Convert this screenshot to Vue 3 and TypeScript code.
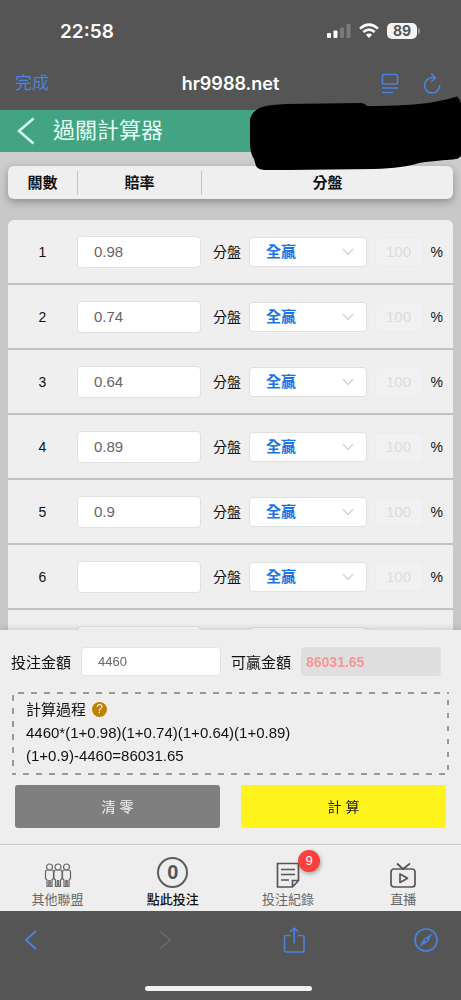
<script setup lang="ts">
import { computed, reactive, ref } from 'vue'

interface Leg {
  odds: string
  result: string
  percent: string
}

const results: string[] = ['全贏', '贏', '輸', '全輸']

const legs = reactive<Leg[]>(
  ['0.98', '0.74', '0.64', '0.89', '0.9', '', '', '', '', ''].map((odds) => ({
    odds,
    result: '全贏',
    percent: '100',
  })),
)

const stake = ref('4460')
const winnings = ref('86031.65')

const formula = computed(() => {
  const factors = legs.filter((leg) => leg.odds !== '').map((leg) => `(1+${leg.odds})`)
  return `${stake.value}*${factors.join('')}-${stake.value}=${winnings.value}`
})

function calculate(): void {
  const amount = Number(stake.value)
  const total = legs
    .filter((leg) => leg.odds !== '')
    .reduce((product, leg) => product * (1 + Number(leg.odds)), amount)
  winnings.value = (Math.floor((total - amount) * 100) / 100).toFixed(2)
}

function clearAll(): void {
  legs.forEach((leg) => {
    leg.odds = ''
  })
  stake.value = ''
  winnings.value = ''
}
</script>

<template>
  <div class="phone">
    <div class="status">
      <span class="time">22:58</span>
      <div class="signals">
        <svg width="24" height="16" viewBox="0 0 24 16" aria-hidden="true">
          <rect x="0" y="10" width="4" height="5" rx="1" fill="#fff" />
          <rect x="6.5" y="7.500" width="4" height="7.500" rx="1" fill="#fff" />
          <rect x="13" y="4.500" width="4" height="10.500" rx="1" fill="#7b7b7b" />
          <rect x="19.500" y="1" width="4" height="14" rx="1" fill="#7b7b7b" />
        </svg>
        <svg width="20" height="16" viewBox="0 0 20 16" aria-hidden="true">
          <g fill="none" stroke="#fff" stroke-width="2.600">
            <path d="M1 5.600Q10 -2.400 19 5.600" />
            <path d="M4.300 9.100Q10 4.200 15.700 9.100" />
          </g>
          <path d="M6.900 11.700Q10 9.300 13.100 11.700L10 15z" fill="#fff" />
        </svg>
        <div class="battery">89</div>
      </div>
    </div>

    <div class="browser">
      <button type="button" class="done">完成</button>
      <span class="host">hr9988.net</span>
      <div class="browser-tools">
        <button type="button" aria-label="閱讀器">
          <svg width="18" height="22" viewBox="0 0 18 22" fill="none" stroke="#4a83dc" stroke-width="1.600">
            <rect x="1.500" y="1.500" width="15" height="9.500" rx="1" />
            <path d="M1 15h16M1 19.500h11" />
          </svg>
        </button>
        <button type="button" aria-label="重新整理">
          <svg width="18" height="22" viewBox="0 0 18 22" fill="none" stroke="#4a83dc" stroke-width="1.600" stroke-linecap="round" stroke-linejoin="round">
            <path d="M12 4.800H9.500A7.600 7.600 0 1 0 16.700 12.500" />
            <path d="M8.500 1l4 3.800-4 3.900" />
          </svg>
        </button>
      </div>
    </div>

    <header class="title-bar">
      <button type="button" class="back" aria-label="返回">
        <svg width="18" height="28" viewBox="0 0 18 28" fill="none" stroke="#d9fff0" stroke-width="2.400">
          <path d="M16.500 1.500L2 14l14.500 12.500" />
        </svg>
      </button>
      <h1>過關計算器</h1>
      <svg class="mask" width="215" height="80" viewBox="0 0 215 80" aria-hidden="true">
        <path
          d="M4 24Q7 12 26 10L40 9L114 8Q119 8 121 11Q165 11 188 7Q203 4 211 1.500Q214 4 215 9V61Q213 64 207 64.500Q185 66 173 68Q158 73 128 74L42 75H20Q12 75 10 71L8 64Q4 58 4 48z"
        />
      </svg>
    </header>

    <main class="content">
      <table class="legs">
        <thead>
          <tr>
            <th>關數</th>
            <th>賠率</th>
            <th>分盤</th>
          </tr>
        </thead>
        <tbody>
          <tr v-for="(leg, i) in legs" :key="i">
            <td class="no">{{ i + 1 }}</td>
            <td><input v-model="leg.odds" class="odds" type="text" :aria-label="`賠率 ${i + 1}`" /></td>
            <td class="outcome">
              <label :for="`result-${i}`">分盤</label>
              <span class="picker">
                <select :id="`result-${i}`" v-model="leg.result">
                  <option v-for="r in results" :key="r">{{ r }}</option>
                </select>
                <svg width="12" height="8" viewBox="0 0 12 8" fill="none" stroke="#c4c4c4" stroke-width="1.100">
                  <path d="M1 1l5 5.500L11 1" />
                </svg>
              </span>
              <input :id="`percent-${i}`" v-model="leg.percent" class="percent" type="text" disabled />
              <label :for="`percent-${i}`">%</label>
            </td>
          </tr>
        </tbody>
      </table>
    </main>

    <section class="panel">
      <div class="amounts">
        <label for="stake">投注金額</label>
        <input id="stake" v-model="stake" type="text" />
        <label for="winnings">可贏金額</label>
        <input id="winnings" class="winnings" :value="winnings" type="text" readonly />
      </div>
      <div class="process">
        <div class="process-title">
          計算過程
          <button type="button" class="help" aria-label="說明">?</button>
        </div>
        <p>{{ formula }}</p>
      </div>
      <div class="actions">
        <button type="button" class="clear" @click="clearAll">清 零</button>
        <button type="button" class="calculate" @click="calculate">計 算</button>
      </div>
    </section>

    <nav class="tabs">
      <a href="#leagues">
        <span class="icon">
          <svg width="28" height="26" viewBox="0 0 28 26" fill="#eee" stroke="#666" stroke-width="1.200" stroke-linejoin="round">
            <g v-for="x in [1, 18, 9.500]" :key="x" :transform="`translate(${x} 1)`">
              <path d="M2.500 7H6.500Q8.500 7 8.500 9V15.500L7 17V23.500H5.200V17.500H3.800V23.500H2V17L.5 15.500V9Q.5 7 2.500 7z" />
              <circle cx="4.500" cy="4" r="3" />
            </g>
          </svg>
        </span>
        其他聯盟
      </a>
      <a href="#slip" class="active">
        <span class="icon"><span class="count">0</span></span>
        點此投注
      </a>
      <a href="#records">
        <span class="icon">
          <svg width="24" height="26" viewBox="0 0 24 26" fill="none" stroke="#555" stroke-width="1.700">
            <path d="M1.500 1.500H22.500V18.500L16.500 25H1.500zM22.500 18.500H16.500V25" />
            <path d="M5 7.500H19M5 12.500H19M5 18H13" />
          </svg>
          <span class="badge">9</span>
        </span>
        投注紀錄
      </a>
      <a href="#live">
        <span class="icon">
          <svg width="26" height="26" viewBox="0 0 26 26" fill="none" stroke="#555" stroke-width="1.700" stroke-linejoin="round">
            <rect x="1" y="7" width="24" height="18" rx="3" />
            <path d="M7 1.500L13 7l7-5.500M10 12v8.500l7.500-4.200z" />
          </svg>
        </span>
        直播
      </a>
    </nav>

    <footer class="toolbar">
      <div class="tools">
        <button type="button" aria-label="上一頁">
          <svg width="24" height="26" viewBox="0 0 24 26" fill="none" stroke="#4a83dc" stroke-width="2">
            <path d="M17 4L7 13l10 9" />
          </svg>
        </button>
        <button type="button" aria-label="下一頁" disabled>
          <svg width="24" height="26" viewBox="0 0 24 26" fill="none" stroke="#6b6b6b" stroke-width="1.600">
            <path d="M9 4l10 9-10 9" />
          </svg>
        </button>
        <button type="button" aria-label="分享">
          <svg width="24" height="26" viewBox="0 0 24 26" fill="none" stroke="#4a83dc" stroke-width="1.600" stroke-linecap="round" stroke-linejoin="round">
            <path d="M8 8.500H4Q2.500 8.500 2.500 10V23Q2.500 25 4.500 25H20Q22 25 22 23V10Q22 8.500 20.500 8.500H16.500" />
            <path d="M12.200 16V1M8.500 4.500L12.200 1l3.700 3.500" />
          </svg>
        </button>
        <button type="button" aria-label="Safari">
          <svg width="24" height="26" viewBox="0 0 24 26" fill="none" stroke="#4a83dc" stroke-width="1.700">
            <circle cx="12" cy="13" r="11" />
            <path d="M18.500 6.500L13.800 15 5.500 19.500l4.700-8.300z" fill="#4a83dc" stroke="none" />
            <circle cx="12" cy="13" r="1.300" fill="#555" stroke="none" />
          </svg>
        </button>
      </div>
      <div class="home"></div>
    </footer>
  </div>
</template>

<style>
body {
  background: #555;
}
</style>

<style scoped>
.phone {
  display: flex;
  flex-direction: column;
  height: 100vh;
  min-height: 640px;
  background: #555;
  color: #111;
  font-family: 'Liberation Sans', 'Noto Sans CJK TC', sans-serif;
  font-size: 15px;
}

.phone * {
  box-sizing: border-box;
}

button,
input,
select {
  margin: 0;
  padding: 0;
  border: 0;
  background: none;
  font-family: inherit;
}

svg {
  display: block;
}

.status {
  display: flex;
  flex: none;
  justify-content: space-between;
  align-items: center;
  height: 62px;
  padding: 0 44px 0 60px;
  color: #fff;
  font-family: Inter, sans-serif;
}

.time {
  font-size: 19px;
  font-weight: 600;
}

.signals {
  display: flex;
  align-items: center;
  gap: 8px;
}

.battery {
  position: relative;
  width: 30px;
  height: 16px;
  border-radius: 5px;
  background: #f4f4f4;
  color: #555;
  font-size: 14px;
  font-weight: 700;
  line-height: 16px;
  text-align: center;
}

.battery::after {
  content: '';
  position: absolute;
  top: 5px;
  right: -3px;
  width: 2px;
  height: 6px;
  border-radius: 0 2px 2px 0;
  background: #999;
}

.browser {
  display: grid;
  flex: none;
  grid-template-columns: 1fr auto 1fr;
  align-items: center;
  height: 48px;
  padding: 0 15px 5px;
}

.done {
  justify-self: start;
  color: #4a83dc;
  font-size: 17px;
  line-height: 20px;
}

.host {
  color: #fff;
  font-family: Inter, sans-serif;
  font-size: 18px;
  font-weight: 600;
}

.browser-tools {
  display: flex;
  justify-self: end;
  gap: 24px;
  padding-right: 5px;
}

.title-bar {
  position: relative;
  z-index: 2;
  display: flex;
  flex: none;
  align-items: center;
  gap: 18px;
  height: 42px;
  padding-left: 17px;
  background: #42a482;
  color: #e4fff5;
}

.title-bar h1 {
  margin: 0;
  font-size: 22px;
  font-weight: 400;
  line-height: 42px;
}

.mask {
  position: absolute;
  top: -15px;
  right: 0;
}

.content {
  flex: 1;
  min-height: 0;
  padding: 14px 8px 0;
  background: linear-gradient(#cecece, #c8c8c8 60px);
}

.legs {
  display: flex;
  flex-direction: column;
  gap: 21px;
  height: 100%;
}

.legs thead {
  display: block;
  flex: none;
  border-radius: 6px;
  background: #efefef;
  box-shadow: 0 3px 9px rgba(0, 0, 0, 0.3);
}

.legs tbody {
  display: block;
  flex: 1;
  min-height: 0;
  overflow-y: auto;
  border-radius: 6px 6px 0 0;
  background: #efefef;
  scrollbar-width: none;
}

.legs tr {
  display: grid;
  grid-template-columns: 69px 124px minmax(0, 1fr);
  align-items: center;
}

.legs th {
  padding: 0;
  color: #111;
  font-size: 15px;
  font-weight: 700;
  line-height: 24px;
  text-align: center;
}

.legs th + th {
  border-left: 1px solid #c4c4c4;
}

.legs thead tr {
  height: 33px;
}

.legs tbody tr {
  height: 65px;
  border-bottom: 2px solid #c2c2c2;
}

.legs td {
  padding: 0;
}

.no {
  font-size: 14px;
  text-align: center;
}

.odds {
  display: block;
  width: 100%;
  height: 32px;
  padding: 0 16px;
  border: 1px solid #e0e0e0;
  border-radius: 4px;
  background: #fff;
  color: #666;
  font-size: 15px;
}

.legs .outcome {
  display: flex;
  align-items: center;
  gap: 8px;
  padding: 0 10px 0 12px;
  font-size: 14px;
  line-height: 18px;
}

.picker {
  position: relative;
  flex: 1;
  min-width: 0;
}

.picker select {
  display: block;
  width: 100%;
  height: 30px;
  padding: 0 16px;
  border: 1px solid #e0e0e0;
  border-radius: 4px;
  background: #fff;
  color: #1a73e8;
  font-size: 15px;
  font-weight: 700;
  appearance: none;
}

.picker svg {
  position: absolute;
  top: 11px;
  right: 13px;
  pointer-events: none;
}

.percent {
  width: 48px;
  height: 30px;
  border: 1px solid #ececee;
  border-radius: 4px;
  background: #f1f1f2;
  color: #dcdcdc;
  font-size: 15px;
  text-align: center;
}

.panel {
  position: relative;
  flex: none;
  padding: 17px 12px 16px;
  background: #eee;
  box-shadow: 0 -2px 6px rgba(0, 0, 0, 0.12);
}

.amounts {
  display: grid;
  grid-template-columns: auto 1fr auto 1fr;
  align-items: center;
  gap: 10px;
  margin: 0 8px 0 -1px;
}

.amounts input {
  width: 100%;
  min-width: 0;
  height: 29px;
  padding: 0 16px;
  border: 1px solid #e4e4e4;
  border-radius: 4px;
  background: #fff;
  color: #666;
  font-size: 13px;
}

.amounts .winnings {
  padding: 0 4px;
  border-color: #dfdfdf;
  background: #dfdfdf;
  color: #f59598;
  font-size: 14px;
  font-weight: 700;
}

.process {
  min-height: 83px;
  margin-top: 16px;
  padding: 6px 14px;
  background:
    repeating-linear-gradient(90deg, transparent 0 6px, #999 6px 12px, transparent 12px 13px) 0 0 / 100% 2px no-repeat,
    repeating-linear-gradient(90deg, #999 0 4px, transparent 4px 11px, #999 11px 13px) 0 100% / 100% 2px no-repeat,
    repeating-linear-gradient(transparent 0 3px, #999 3px 9px, transparent 9px 13px) 0 0 / 2px 100% no-repeat,
    repeating-linear-gradient(transparent 0 8px, #999 8px 13px) 100% 0 / 2px 100% no-repeat;
  line-height: 23px;
}

.process p {
  margin: 0;
}

.process-title {
  display: flex;
  align-items: center;
  gap: 6px;
}

.help {
  width: 15px;
  height: 15px;
  border-radius: 50%;
  background: #c08000;
  color: #fff;
  font-size: 12px;
  line-height: 15px;
}

.actions {
  display: grid;
  grid-template-columns: 1fr 1fr;
  gap: 21px;
  margin: 10px 3px 0;
}

.actions button {
  height: 43px;
  padding-bottom: 2px;
  border-radius: 3px;
  font-size: 14px;
}

.clear {
  background: #7f7f7f;
  color: #f4f4f4;
}

.calculate {
  background: #fff31c;
  color: #222;
}

.tabs {
  position: relative;
  display: grid;
  flex: none;
  grid-template-columns: repeat(4, 1fr);
  height: 67px;
  border-top: 1px solid #c8c8c8;
  background: #eee;
}

.tabs a {
  display: flex;
  flex-direction: column;
  align-items: center;
  padding-top: 11px;
  color: #666;
  font-size: 13px;
  line-height: 20px;
  text-decoration: none;
}

.tabs .active {
  color: #111;
  font-weight: 500;
}

.icon {
  position: relative;
  display: flex;
  justify-content: center;
  align-items: flex-end;
  height: 32px;
  margin-bottom: 2px;
}

.count {
  width: 31px;
  height: 31px;
  border: 2px solid #5c5c5c;
  border-radius: 50%;
  color: #555;
  font-size: 20px;
  font-weight: 700;
  line-height: 27px;
  text-align: center;
}

.badge {
  position: absolute;
  top: -6px;
  left: 22px;
  width: 22px;
  height: 22px;
  border-radius: 50%;
  background: #fc3e3e;
  box-shadow: 1px 2px 4px rgba(0, 0, 0, 0.3);
  color: #fff;
  font-size: 13px;
  line-height: 22px;
  text-align: center;
}

.toolbar {
  display: flex;
  flex: none;
  flex-direction: column;
  justify-content: space-between;
  height: 89px;
  padding: 16px 23px 9px 19px;
}

.tools {
  display: flex;
  justify-content: space-between;
}

.home {
  width: 40%;
  height: 5px;
  margin: 0 auto;
  border-radius: 3px;
  background: #f2f2f2;
}
</style>
